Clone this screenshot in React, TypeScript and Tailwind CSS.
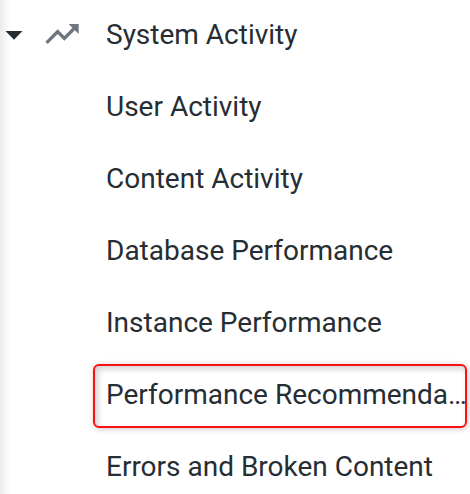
const items = [
  'User Activity',
  'Content Activity',
  'Database Performance',
  'Instance Performance',
  'Performance Recommenda…',
  'Errors and Broken Content',
];

export default function App() {
  return (
    <nav className="h-[494px] w-[470px] overflow-hidden bg-white bg-linear-to-r from-[#ececec] to-white to-[10px] font-[Roboto,sans-serif] text-[28px] leading-[72px] text-[#262d33]">
      <div className="-mt-px flex h-[72px] items-center">
        <svg className="ml-[5px] h-[9px] w-[18px]" viewBox="0 0 18 9" fill="#262d33">
          <path d="M.5 0h17L9 8.7z" />
        </svg>
        <svg className="mb-[2px] ml-[19px] h-[40px] w-[40px]" viewBox="0 0 24 24" fill="#6e777f">
          <path d="M16 6l2.29 2.29-4.88 4.88-4-4L2 16.59 3.41 18l6-6 4 4 6.3-6.29L22 12V6z" />
        </svg>
        <span className="ml-[24px]">System Activity</span>
      </div>
      <ul>
        {items.map((item) =>
          item.startsWith('Performance') ? (
            <li key={item} className="h-[72px] pt-[5px] pl-[93px]">
              <div className="h-[64px] w-[374px] whitespace-nowrap rounded-[6px] border-2 border-[#fb1010] pl-[11px] leading-[58px] shadow-[1px_1px_6px_rgba(0,0,0,0.22),inset_3px_3px_6px_rgba(0,0,0,0.18)]">
                {item}
              </div>
            </li>
          ) : (
            <li key={item} className="h-[72px] pl-[106px]">{item}</li>
          ),
        )}
      </ul>
    </nav>
  );
}
